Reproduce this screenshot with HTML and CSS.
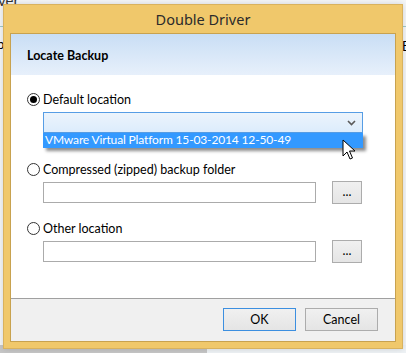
FILE: index.html
```html
<!DOCTYPE html>
<html lang="en">
<head>
    <meta charset="UTF-8">
    <title>Double Driver</title>
    <link rel="stylesheet" href="styles.css">
</head>
<body>
    <div class="desktop">
        <!-- bits of the window behind -->
        <div class="back-window">
            <span class="back-title">ver</span>
            <div class="back-rule"></div>
            <span class="back-p">p</span>
            <span class="back-e">E</span>
        </div>
        <div class="back-bottom"></div>

        <div class="dialog">
            <div class="title-bar">Double Driver</div>
            <div class="client">
                <div class="header">Locate Backup</div>

                <div class="body">
                    <div class="option">
                        <span class="radio checked"></span>
                        <span>Default location</span>
                    </div>
                    <div class="combo-wrap">
                        <div class="combo">
                            <svg class="chevron" width="9" height="6" viewBox="0 0 9 6">
                                <path d="M1 1 L4.5 4.5 L8 1" fill="none" stroke="#5a5a5a" stroke-width="1.6"/>
                            </svg>
                        </div>
                        <div class="combo-list">VMware Virtual Platform 15-03-2014 12-50-49</div>
                        <svg class="cursor" width="14" height="22" viewBox="0 0 14 22">
                            <path d="M1 1 L1 17 L5 13 L8 20 L10.5 19 L7.5 12 L13 12 Z" fill="#fff" stroke="#000" stroke-width="1" stroke-linejoin="round"/>
                        </svg>
                    </div>

                    <div class="option">
                        <span class="radio"></span>
                        <span>Compressed (zipped) backup folder</span>
                    </div>
                    <div class="field-row">
                        <div class="field"></div>
                        <button class="btn-browse">...</button>
                    </div>

                    <div class="option">
                        <span class="radio"></span>
                        <span>Other location</span>
                    </div>
                    <div class="field-row">
                        <div class="field"></div>
                        <button class="btn-browse">...</button>
                    </div>
                </div>

                <div class="footer">
                    <button class="btn default">OK</button>
                    <button class="btn">Cancel</button>
                </div>
            </div>
        </div>
    </div>
</body>
</html>
```

FILE: styles.css
```css
* {
    margin: 0;
    padding: 0;
    box-sizing: border-box;
}

body {
    font-family: 'Lato', 'Noto Sans', sans-serif;
    font-size: 12.5px;
    color: #000;
    background: #eef2f5;
}

.desktop {
    position: relative;
    width: 406px;
    height: 353px;
    overflow: hidden;
    background: #eef2f5;
}

/* window in the background */
.back-window {
    position: absolute;
    left: 0;
    top: 0;
    width: 406px;
    height: 345px;
    background: #f4f6f8;
}

.back-title {
    position: absolute;
    left: -2px;
    top: -9px;
    font-size: 15px;
    color: #333;
}

.back-rule {
    position: absolute;
    left: 0;
    top: 26px;
    width: 406px;
    height: 1px;
    background: #9fc9c9;
}

.back-p {
    position: absolute;
    left: -3px;
    top: 36px;
    font-size: 13px;
}

.back-e {
    position: absolute;
    left: 402px;
    top: 38px;
    font-size: 13px;
}

.back-bottom {
    position: absolute;
    left: 0;
    top: 345px;
    width: 207px;
    height: 8px;
    background: #c6c6c6;
}

.dialog {
    position: absolute;
    left: 3px;
    top: 4px;
    width: 400px;
    height: 345px;
    background: #f0c86b;
    border: 1px solid #d9b25e;
    display: flex;
    flex-direction: column;
    box-shadow: 0 0 6px rgba(0, 0, 0, 0.15);
}

.title-bar {
    height: 28px;
    text-align: center;
    font-family: 'Noto Sans', sans-serif;
    font-size: 14.5px;
    line-height: 28px;
    color: #2b2b2b;
}

.client {
    flex: 1;
    margin: 0 6px 6px 6px;
    border: 1px solid #c8a24f;
    background: #fff;
    display: flex;
    flex-direction: column;
}

.header {
    height: 41px;
    padding-left: 16px;
    font-weight: bold;
    line-height: 43px;
    background: linear-gradient(to bottom, #c9def5, #e7f0fb);
}

.body {
    flex: 1;
    padding: 15px 0 0 16px;
}

.option {
    display: flex;
    align-items: center;
    gap: 3px;
    height: 18px;
}

.radio {
    width: 13px;
    height: 13px;
    border: 1px solid #333;
    border-radius: 50%;
    background: #fff;
    display: flex;
    align-items: center;
    justify-content: center;
}

.radio.checked::after {
    content: '';
    width: 7px;
    height: 7px;
    border-radius: 50%;
    background: #000;
}

.combo-wrap {
    position: relative;
    margin: 4px 0 0 16px;
    width: 320px;
    height: 48px;
}

.combo {
    height: 21px;
    border: 1px solid #569de5;
    background: linear-gradient(to bottom, #ecf4fc, #dcecfc);
    position: relative;
}

.chevron {
    position: absolute;
    right: 6px;
    top: 7px;
}

.combo-list {
    position: absolute;
    left: 0;
    top: 21px;
    width: 320px;
    height: 15px;
    padding-left: 2px;
    background: #3399ff;
    color: #fff;
    font-size: 12px;
    letter-spacing: -0.15px;
    line-height: 14px;
    box-shadow: 3px 3px 3px rgba(0, 0, 0, 0.45);
}

.cursor {
    position: absolute;
    left: 299px;
    top: 27px;
}

.field-row {
    display: flex;
    align-items: center;
    gap: 16px;
    margin: 3px 0 16px 16px;
    height: 22px;
}

.field {
    width: 273px;
    height: 21px;
    border: 1px solid #ababab;
    background: #fff;
}

.btn-browse {
    width: 30px;
    height: 23px;
    border: 1px solid #acacac;
    background: linear-gradient(to bottom, #f0f0f0, #e5e5e5);
    font-family: inherit;
    font-size: 12.5px;
    color: #000;
    line-height: 16px;
}

.footer {
    height: 43px;
    border-top: 1px solid #a0a0a0;
    background: #f0f0f0;
    display: flex;
    justify-content: flex-end;
    align-items: flex-start;
    gap: 9px;
    padding: 9px 17px 0 0;
}

.btn {
    width: 73px;
    height: 23px;
    border: 1px solid #acacac;
    background: linear-gradient(to bottom, #f0f0f0, #e5e5e5);
    font-family: inherit;
    font-size: 12.5px;
    color: #000;
}

.btn.default {
    border-color: #3c8fe0;
}
```
